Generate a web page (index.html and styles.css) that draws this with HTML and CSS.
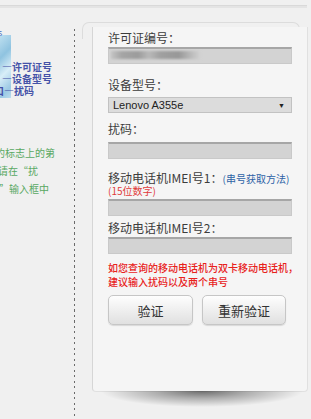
FILE: index.html
```html
<!DOCTYPE html>
<html lang="zh-CN">
<head>
  <meta charset="UTF-8">
  <title>进网许可标志查询</title>
  <meta name="viewport" content="width=device-width, initial-scale=1.0">
  <link rel="stylesheet" href="styles.css">
</head>
<body>
  <div class="topbar"></div>

  <div class="main">
    <div class="side">
      <div class="legend">
        <div class="hint">s</div>
        <div class="legend-text">
          <p>—许可证号</p>
          <p>—设备型号</p>
          <p class="last">口—扰码</p>
        </div>
      </div>
      <div class="tip">
        <p class="l1">的标志上的第</p>
        <p class="l2">请在“扰</p>
        <p class="l3">”输入框中</p>
      </div>
    </div>

    <div class="divider"></div>

    <div class="card">
      <form id="queryForm">
        <div class="label first">许可证编号：</div>
        <div class="field masked"><div class="blur"></div></div>

        <div class="label lbl-device">设备型号：</div>
        <div class="select">
          <span>Lenovo A355e</span>
          <span class="arrow">▼</span>
        </div>

        <div class="label lbl-code">扰码：</div>
        <div class="field fld-code"></div>

        <div class="label lbl-imei1">移动电话机IMEI号1：<a class="how" href="#">(串号获取方法)</a></div>
        <div class="note">(15位数字)</div>
        <div class="field fld-imei1"></div>

        <div class="label lbl-imei2">移动电话机IMEI号2：</div>
        <div class="field fld-imei2"></div>

        <p class="warn">如您查询的移动电话机为双卡移动电话机，<br>建议输入扰码以及两个串号</p>

        <div class="buttons">
          <button type="submit" class="btn">验证</button>
          <button type="reset" class="btn wide">重新验证</button>
        </div>
      </form>
    </div>
  </div>
</body>
</html>
```

FILE: styles.css
```css
body {
  margin: 0;
  background-color: #f0f0f0;
  font-family: "Noto Sans CJK SC", "Liberation Sans", sans-serif;
  color: #444;
  overflow: hidden;
}
p {
  margin: 0;
}
.topbar {
  height: 5px;
  border-bottom: 1px solid #d9d9d9;
  box-shadow: 0 2px 0 #e4e4e4;
  margin-right: 4px;
}
.main {
  display: flex;
  margin-top: 2px;
  min-height: 411px;
}

/* left column, cut off by the window */
.side {
  width: 74px;
  overflow: hidden;
  flex: none;
}
.legend {
  margin-top: 20px;
  background: linear-gradient(135deg, #bfe0f0 0%, #8fc3e0 30%, #d8eef8 55%, #9cc9e4 80%, #c6e3f2 100%) 0 7px / 11px 67px no-repeat;
}
.hint {
  font-size: 9px;
  line-height: 10px;
  color: #4a6cc0;
  text-indent: -2px;
}
.legend-text {
  margin-top: 23px;
  padding-bottom: 1px;
  font-size: 10px;
  line-height: 12px;
  font-weight: bold;
  color: #4552a8;
  white-space: nowrap;
}
.legend-text p {
  text-indent: 2px;
}
.legend-text .last {
  text-indent: -6px;
}
.tip {
  margin-top: 46px;
  font-size: 10px;
  line-height: 18px;
  color: #58a862;
  white-space: nowrap;
}
.tip .l1 { text-indent: -5px; }
.tip .l2 { text-indent: -2px; }
.tip .l3 { text-indent: -1px; }

.divider {
  width: 1px;
  flex: none;
  margin-top: 21px;
  background: repeating-linear-gradient(to bottom, #6a6a6a 0 2px, transparent 2px 5.5px);
}

/* query card */
.card {
  position: relative;
  box-sizing: border-box;
  width: 216px;
  height: 365px;
  margin-top: 19px;
  margin-left: 17px;
  padding: 3px 15px 0;
  background-color: #f5f5f5;
  border: 1px solid #e0e0e0;
  border-left-color: #d6d6d6;
  border-top: none;
  border-radius: 0 0 4px 4px;
}
.card::before {
  content: "";
  position: absolute;
  left: -11px;
  top: -5px;
  width: 216px;
  height: 16px;
  border: 1px solid #dcdcdc;
  border-bottom: none;
  border-radius: 7px 7px 0 0;
  z-index: -1;
}
.card::after {
  content: "";
  position: absolute;
  left: 8px;
  right: 4px;
  top: 100%;
  height: 16px;
  background: radial-gradient(ellipse 50% 100% at 50% 0, rgba(0, 0, 0, 0.55) 0%, rgba(0, 0, 0, 0.28) 45%, rgba(0, 0, 0, 0) 100%);
}

.label {
  font-size: 12px;
  line-height: 16px;
  color: #3c3c3c;
  white-space: nowrap;
}
.lbl-device { margin-top: 13px; }
.lbl-code { margin-top: 8px; }
.lbl-imei1 { margin-top: 12px; line-height: 13px; }
.lbl-imei2 { margin-top: 4px; }

.how {
  font-size: 10px;
  color: #2d62a6;
  text-decoration: none;
}
.note {
  font-size: 10px;
  line-height: 11px;
  color: #e03a3a;
}

.field {
  box-sizing: border-box;
  height: 17px;
  margin-top: 1px;
  background-color: #d3d3d3;
  border: 1px solid #c9c9c9;
  border-top: 2px solid #a6a6a6;
}
.fld-code { margin-top: 5px; }
.fld-imei1 { margin-top: 3px; }
.masked {
  position: relative;
  overflow: hidden;
}
.blur {
  position: absolute;
  left: 2px;
  top: 2px;
  width: 90px;
  height: 8px;
  background: linear-gradient(to right, #c4c4c4 0, #a5a5a5 12%, #9c9c9c 30%, #b9b9b9 42%, #a0a0a0 55%, #989898 75%, #bdbdbd 90%, #d3d3d3 100%);
  filter: blur(1px);
}

.select {
  box-sizing: border-box;
  height: 16px;
  margin-top: 4px;
  padding: 0 6px 0 4px;
  display: flex;
  align-items: center;
  justify-content: space-between;
  background-color: #dcdcdc;
  border: 1px solid #c2c2c2;
  font-family: "Liberation Sans", Arial, sans-serif;
  font-size: 11px;
  color: #222;
}
.select .arrow {
  font-size: 7px;
}

.warn {
  margin-top: 7px;
  font-size: 10px;
  line-height: 14px;
  font-weight: 500;
  color: #e8221c;
  white-space: nowrap;
}

.buttons {
  display: flex;
  gap: 9px;
  margin-top: 6px;
}
.btn {
  flex: 0 0 85px;
  height: 30px;
  padding: 0;
  border: 1px solid #c6c6c6;
  border-radius: 5px;
  background: linear-gradient(#fefefe, #e0e0e0);
  box-shadow: 0 1px 1px rgba(0, 0, 0, 0.12);
  font-family: "Noto Sans CJK SC", sans-serif;
  font-size: 13px;
  color: #333;
  cursor: pointer;
}
.btn.wide {
  flex-basis: 84px;
}
```
